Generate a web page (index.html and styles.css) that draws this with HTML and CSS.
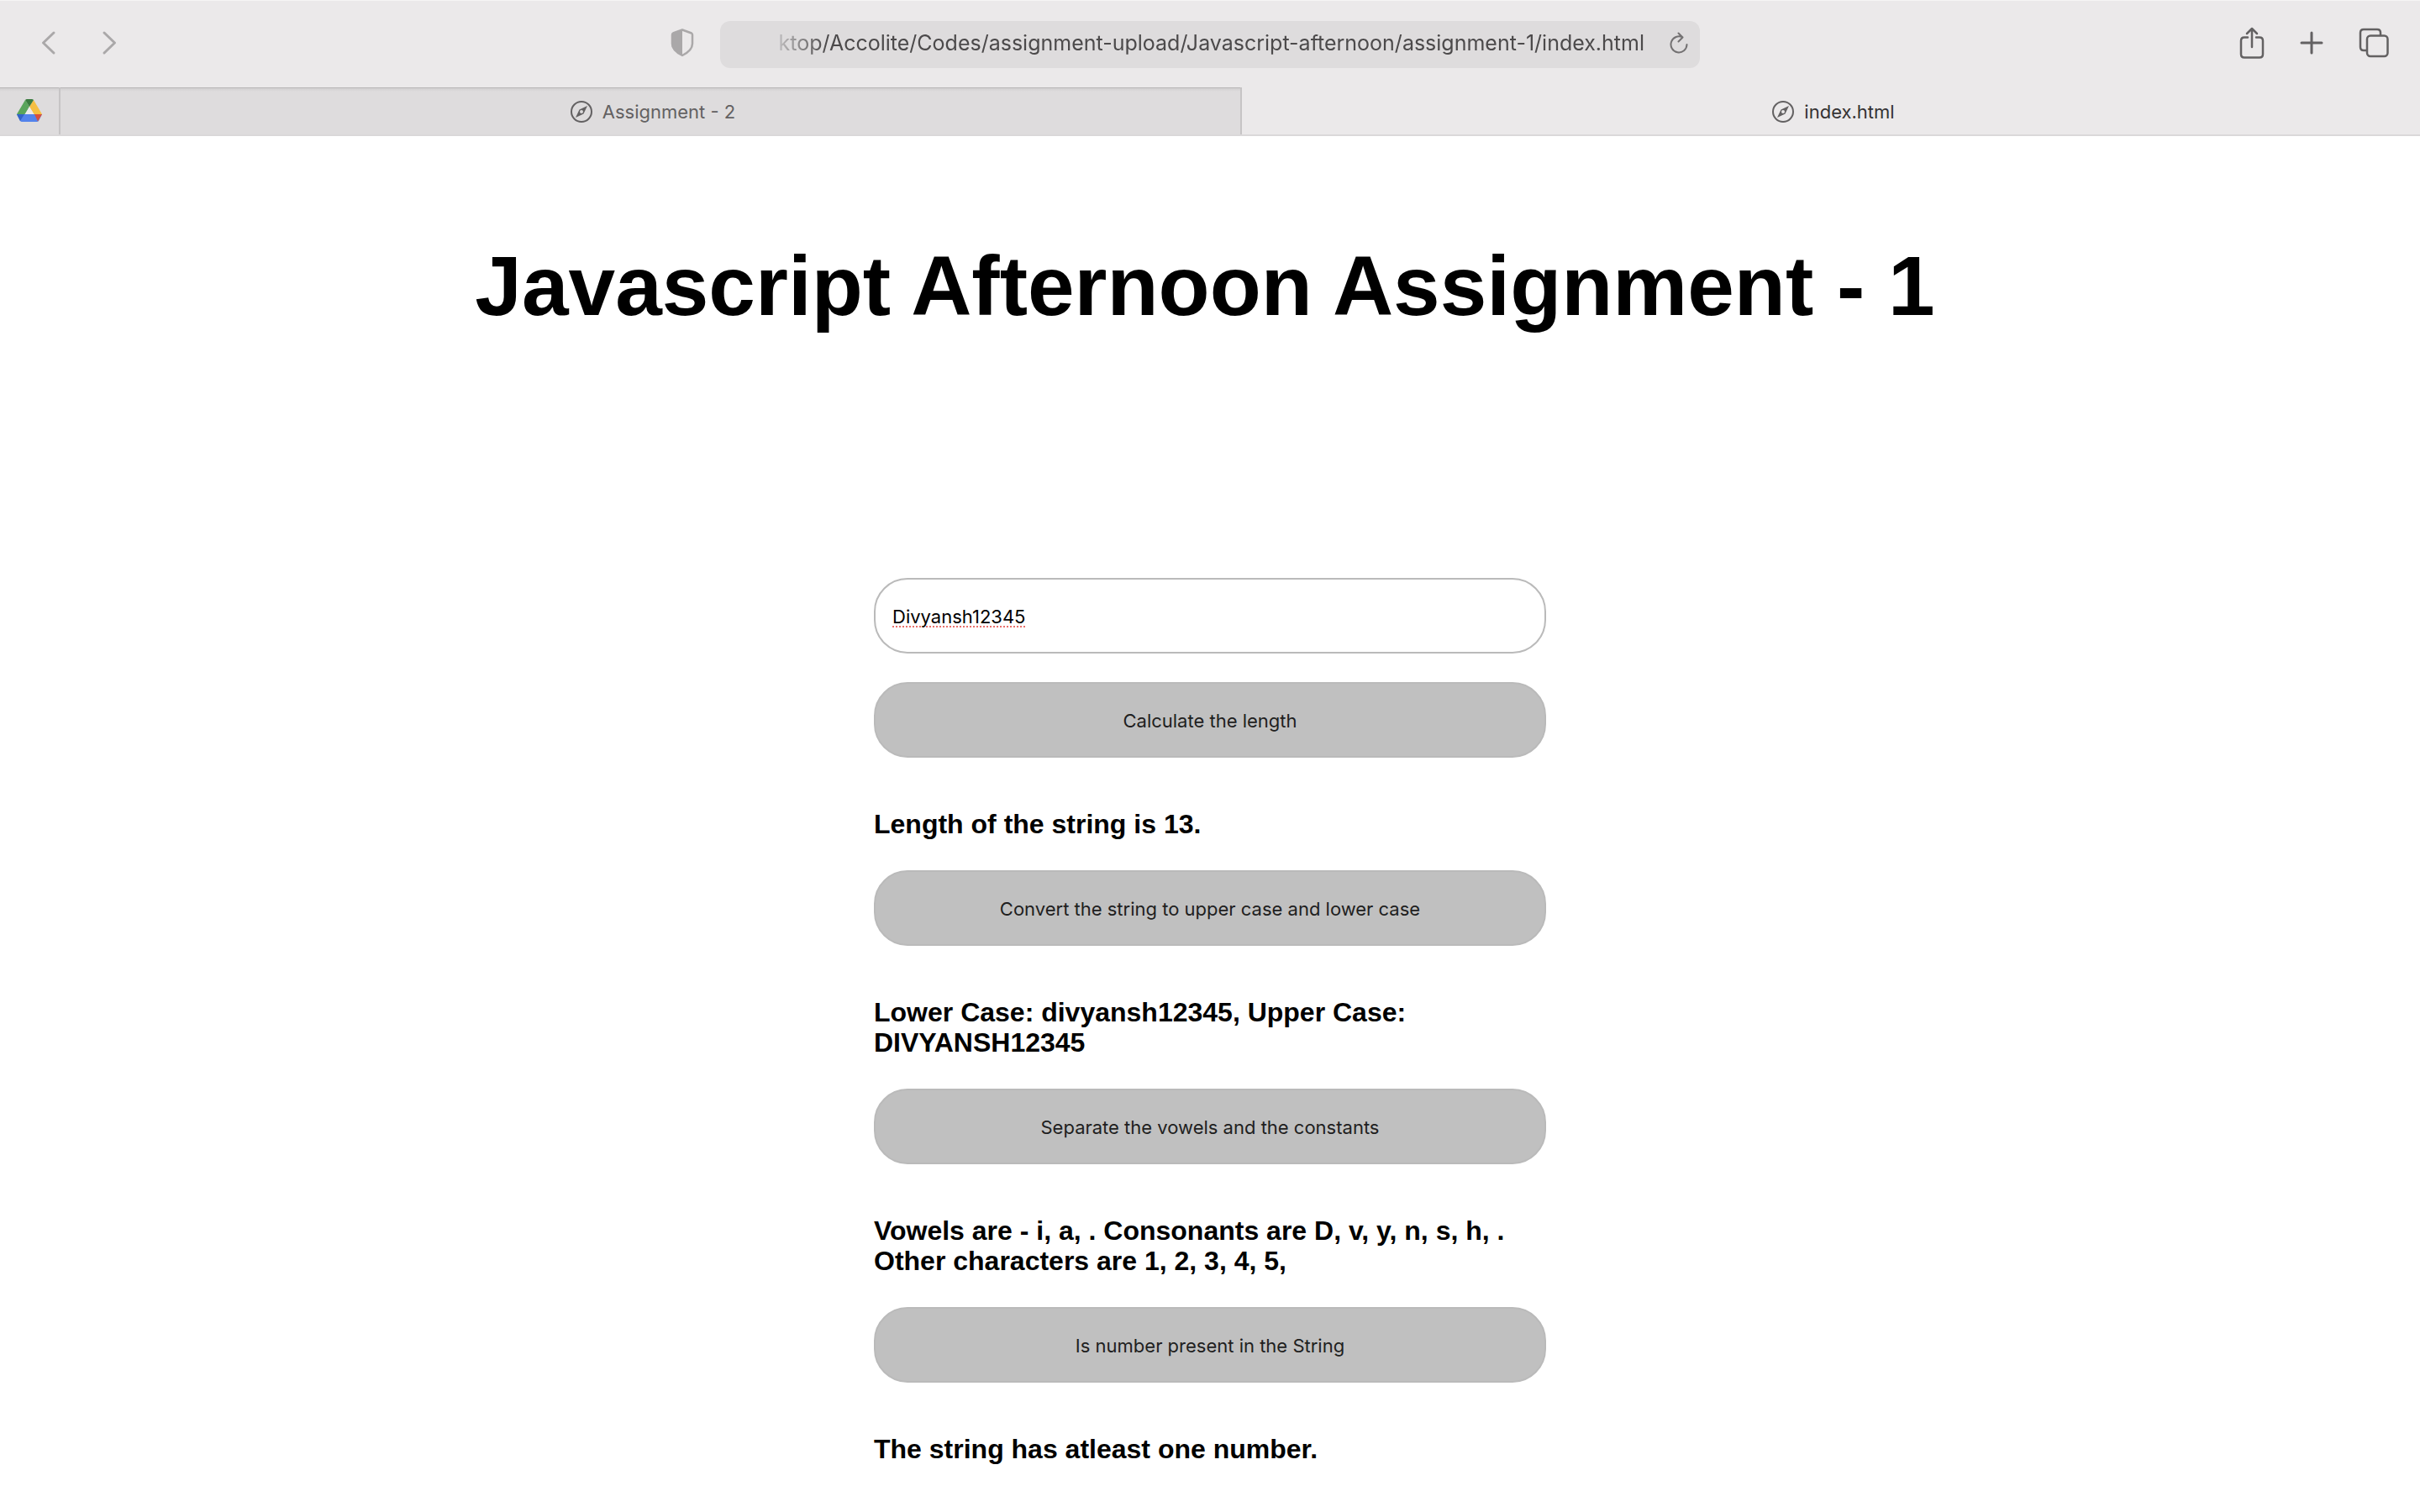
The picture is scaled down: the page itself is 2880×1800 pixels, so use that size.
FILE: index.html
```html
<!DOCTYPE html>
<html lang="en">
<head>
<meta charset="utf-8">
<title>index.html</title>
<link rel="stylesheet" href="styles.css">
</head>
<body>
<header class="browser">
  <div class="toolbar">
    <div class="tools tools-start">
      <div class="history">
        <button class="icon-button" type="button" aria-label="Back"><svg width="18" height="30" viewBox="0 0 18 30" fill="none" stroke="#aaa8a9" stroke-width="3" stroke-linecap="round" stroke-linejoin="round"><path d="M15 3 2.500 15 15 27"/></svg></button>
        <button class="icon-button" type="button" aria-label="Forward"><svg width="18" height="30" viewBox="0 0 18 30" fill="none" stroke="#aaa8a9" stroke-width="3" stroke-linecap="round" stroke-linejoin="round"><path d="M3 3 15.500 15 3 27"/></svg></button>
      </div>
      <button class="icon-button" type="button" aria-label="Privacy report"><svg width="28" height="34" viewBox="0 0 28 34"><path d="M14 1.500 25 5.500Q26 6 26 7.500V18Q26 26 14 32Q2 26 2 18V7.500Q2 6 3 5.500Z" fill="none" stroke="#aaa8a9" stroke-width="2.500" stroke-linejoin="round"/><path d="M14 1V32.500Q1 26 1 18V7Q1 5.500 3 5Z" fill="#aaa8a9"/></svg></button>
    </div>
    <div class="address">
      <input class="address-text" type="text" aria-label="Address" spellcheck="false" value="ktop/Accolite/Codes/assignment-upload/Javascript-afternoon/assignment-1/index.html">
      <button class="icon-button" type="button" aria-label="Reload"><svg width="22" height="26" viewBox="0 0 22 26" fill="none" stroke="#737172" stroke-width="2" stroke-linecap="round" stroke-linejoin="round"><path d="M20.500 15A9.500 9.500 0 1 1 15.500 6.500M10.500 1.500 15.500 6.500 10.500 11.500"/></svg></button>
    </div>
    <div class="tools tools-end">
      <button class="icon-button" type="button" aria-label="Share"><svg width="30" height="38" viewBox="0 0 30 38" fill="none" stroke="#636162" stroke-width="2.500" stroke-linecap="round" stroke-linejoin="round"><path d="M10 12.500H6Q2 12.500 2 16.500V32.500Q2 36.500 6 36.500H24Q28 36.500 28 32.500V16.500Q28 12.500 24 12.500H20M15 24V2M9 8 15 2 21 8"/></svg></button>
      <button class="icon-button" type="button" aria-label="New tab"><svg width="28" height="28" viewBox="0 0 28 28" fill="none" stroke="#636162" stroke-width="3" stroke-linecap="round"><path d="M14 2V26M2 14H26"/></svg></button>
      <button class="icon-button" type="button" aria-label="Tab overview"><svg width="36" height="36" viewBox="0 0 36 36" fill="none" stroke="#636162" stroke-width="2.500"><path d="M9 27H6Q2 27 2 23V6Q2 2 6 2H22Q26 2 26 6V9"/><rect x="10" y="9.500" width="24.500" height="24.500" rx="4"/></svg></button>
    </div>
  </div>
  <nav class="tabs" aria-label="Tabs">
    <a class="tab tab-pinned" href="#drive" aria-label="Google Drive"><svg width="30" height="28" viewBox="0 0 30 28"><path d="M10 1 15 9 6 26Q5 27 4 25L0 18Z" fill="#5aa55b"/><path d="M20 1 30 18 21 19 15 9Z" fill="#f5bf42"/><path d="M10 1Q11 0 12 0H18Q19 0 20 1L15 9Z" fill="#3a7b3e"/><path d="M0 18H30L26 26Q25 27 24 27H6Q5 27 4 26Z" fill="#5383ec"/><path d="M0 18H9L4 26Z" fill="#3364c8"/><path d="M21 18H30L25 26.500Z" fill="#d8503e"/><path d="M15 9 20.500 18H9.500Z" fill="#edebec"/></svg></a>
    <a class="tab tab-titled" href="#assignment-2"><svg width="26" height="26" viewBox="0 0 26 26"><circle cx="13" cy="13" r="12" fill="none" stroke="#636162" stroke-width="2"/><path fill="#636162" fill-rule="evenodd" d="M20 6 15.500 15.500 6 20 10.500 10.500ZM13 11A2 2 0 1 0 13 15 2 2 0 1 0 13 11Z"/></svg>Assignment - 2</a>
    <a class="tab tab-titled tab-active" href="#index" aria-current="page"><svg width="26" height="26" viewBox="0 0 26 26"><circle cx="13" cy="13" r="12" fill="none" stroke="#636162" stroke-width="2"/><path fill="#636162" fill-rule="evenodd" d="M20 6 15.500 15.500 6 20 10.500 10.500ZM13 11A2 2 0 1 0 13 15 2 2 0 1 0 13 11Z"/></svg>index.html</a>
  </nav>
</header>
<main class="page">
  <h1 class="title">Javascript Afternoon Assignment - 1</h1>
  <form class="string-form">
    <input class="field" type="text" aria-label="String" spellcheck="false" value="Divyansh12345">
    <button class="action" type="button">Calculate the length</button>
    <p class="result">Length of the string is 13.</p>
    <button class="action" type="button">Convert the string to upper case and lower case</button>
    <p class="result">Lower Case: divyansh12345, Upper Case: DIVYANSH12345</p>
    <button class="action" type="button">Separate the vowels and the constants</button>
    <p class="result">Vowels are - i, a, . Consonants are D, v, y, n, s, h, . Other characters are 1, 2, 3, 4, 5,</p>
    <button class="action" type="button">Is number present in the String</button>
    <p class="result">The string has atleast one number.</p>
  </form>
</main>
</body>
</html>
```
FILE: styles.css
```css
* {
  box-sizing: border-box;
}

body {
  margin: 0;
  background: #fff;
  color: #000;
  font-family: "Liberation Sans", Arial, sans-serif;
}

button,
input {
  margin: 0;
  font-family: Inter, sans-serif;
}

.browser {
  background: #ebe9ea;
  border-top: 1px solid #f6f5f5;
  font-family: Inter, sans-serif;
}

.toolbar {
  display: grid;
  grid-template-columns: 1fr minmax(0, 1166px) 1fr;
  align-items: center;
  height: 103px;
}

.tools {
  display: flex;
  align-items: center;
  padding-bottom: 4px;
}

.tools-start {
  justify-content: space-between;
  padding-right: 31px;
  padding-left: 49px;
}

.history {
  display: flex;
  align-items: center;
  gap: 54px;
}

.tools-end {
  justify-content: flex-end;
  gap: 42px;
  padding-right: 37px;
}

.icon-button {
  display: flex;
  padding: 0;
  border: 0;
  background: none;
}

.address {
  display: flex;
  align-items: center;
  justify-content: flex-end;
  gap: 30px;
  height: 56px;
  padding: 0 14px 4px 54px;
  border-radius: 12px;
  background: #dedcdd;
}

.address-text {
  flex: 1;
  min-width: 0;
  padding: 0;
  border: 0;
  background: none;
  color: #4c4a4b;
  font-size: 25px;
  line-height: 32px;
  text-align: right;
  mask-image: linear-gradient(90deg, transparent, #000 72px);
}

.tabs {
  display: grid;
  grid-template-columns: 72px 1fr 1fr;
  height: 58px;
  border-bottom: 2px solid #dad8d9;
}

.tab {
  display: flex;
  align-items: center;
  justify-content: center;
  gap: 12px;
  background: linear-gradient(#b9b7b8 0 1px, #d0cecf 1px, #dedcdd 5px);
  color: #636162;
  font-size: 22px;
  line-height: 28px;
  text-decoration: none;
}

.tab-pinned {
  border-right: 2px solid #c6c4c5;
}

.tab-titled {
  padding: 2px 0 0 6px;
}

.tab-active {
  border-left: 2px solid #c6c4c5;
  background: none;
  color: #343233;
}

.page {
  padding: 120px 40px 40px;
}

.title {
  margin: 0;
  padding-right: 12px;
  font-size: 100px;
  line-height: 116px;
  text-align: center;
}

.string-form {
  display: flex;
  flex-direction: column;
  max-width: 800px;
  margin: 290px auto 0;
}

.field,
.action {
  width: 100%;
  height: 90px;
  padding: 2px 20px 0;
  border: 2px solid #bababa;
  border-radius: 40px;
  font-size: 22px;
  line-height: 28px;
}

.field {
  margin-bottom: 34px;
  background: #fff;
  color: #000;
  text-decoration: underline dotted #e8706c 2px;
  text-decoration-skip-ink: none;
  text-underline-offset: 3px;
}

.action {
  background: #c0c0c0;
  color: #202020;
}

.result {
  margin: 61px 0 37px;
  font-size: 32px;
  font-weight: 700;
  line-height: 36px;
}
```
